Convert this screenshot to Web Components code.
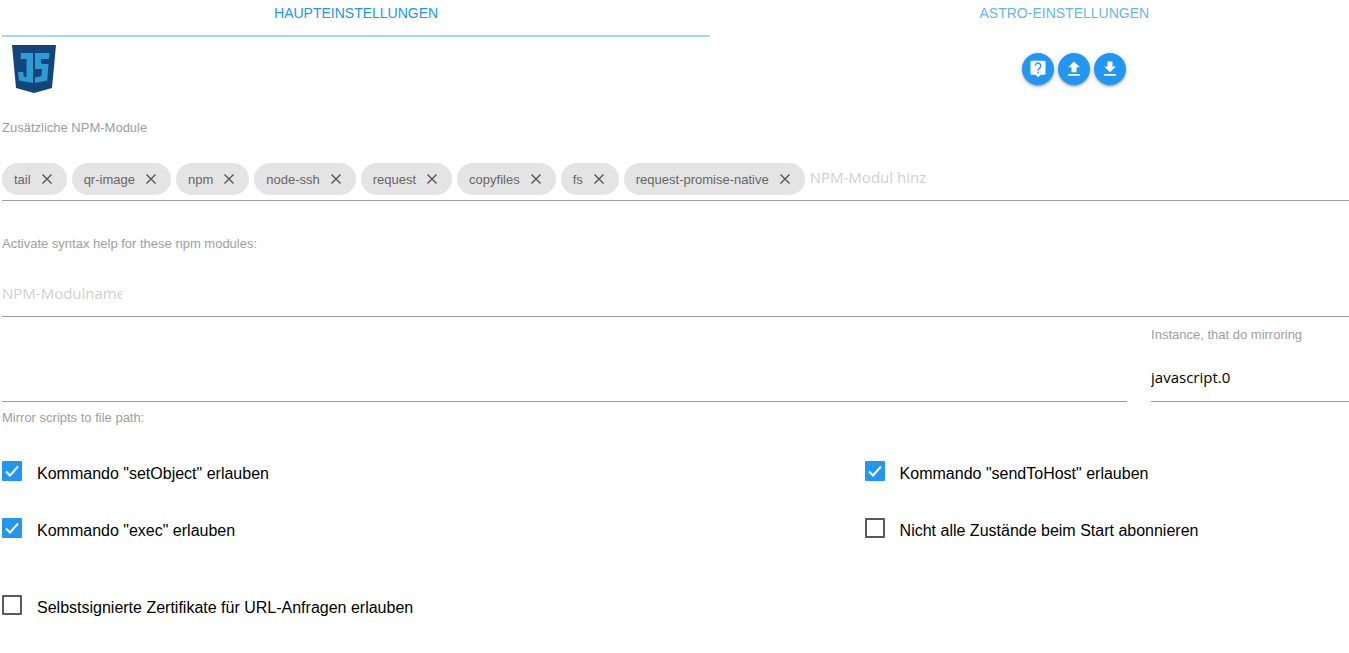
<!DOCTYPE html>
<html lang="de">
<head>
<meta charset="utf-8">
<title>JavaScript Adapter</title>
<style>
  body {
    margin: 0;
    background: #fff;
    font-family: "Liberation Sans", Arial, sans-serif;
  }

  chips-field + chips-field {
    margin-top: 16px;
  }
</style>
</head>
<body>
<adapter-page>
  <tab-bar slot="tabs">
    <tab-item active>Haupteinstellungen</tab-item>
    <tab-item>Astro-Einstellungen</tab-item>
  </tab-bar>
  <adapter-header slot="header">
    <icon-button icon="help" title="Hilfe"></icon-button>
    <icon-button icon="upload" title="Laden"></icon-button>
    <icon-button icon="download" title="Speichern"></icon-button>
  </adapter-header>
  <chips-field label="Zusätzliche NPM-Module" placeholder="NPM-Modul hinz">
    <chip-item>tail</chip-item>
    <chip-item>qr-image</chip-item>
    <chip-item>npm</chip-item>
    <chip-item>node-ssh</chip-item>
    <chip-item>request</chip-item>
    <chip-item>copyfiles</chip-item>
    <chip-item>fs</chip-item>
    <chip-item>request-promise-native</chip-item>
  </chips-field>
  <chips-field label="Activate syntax help for these npm modules:" placeholder="NPM-Modulname"></chips-field>
  <field-row>
    <text-field label="Mirror scripts to file path:"></text-field>
    <select-field label="Instance, that do mirroring" options='["javascript.0"]'></select-field>
  </field-row>
  <check-grid>
    <check-field checked>Kommando "setObject" erlauben</check-field>
    <check-field checked>Kommando "sendToHost" erlauben</check-field>
    <check-field checked>Kommando "exec" erlauben</check-field>
    <check-field>Nicht alle Zustände beim Start abonnieren</check-field>
  </check-grid>
  <check-grid>
    <check-field>Selbstsignierte Zertifikate für URL-Anfragen erlauben</check-field>
  </check-grid>
</adapter-page>

<script>
// Attaches an open shadow root filled with the given markup
function render(el, html) {
  const tpl = document.createElement('template');
  tpl.innerHTML = html;
  el.attachShadow({mode: 'open'}).appendChild(tpl.content.cloneNode(true));
}

// Page frame, the content runs a little past the right edge
class AdapterPage extends HTMLElement {
  constructor() {
    super();
    render(this, `
      <style>
        :host {
          display: block;
          overflow: hidden;
        }

        .content {
          display: flex;
          flex-direction: column;
          width: 105%;
          margin-left: 2px;
        }
      </style>
      <div class="content">
        <slot name="tabs"></slot>
        <slot name="header"></slot>
        <slot></slot>
      </div>
    `);
  }
}
customElements.define('adapter-page', AdapterPage);

class TabBar extends HTMLElement {
  constructor() {
    super();
    render(this, `
      <style>
        :host {
          display: block;
        }

        nav {
          display: flex;
        }
      </style>
      <nav><slot></slot></nav>
    `);
  }
}
customElements.define('tab-bar', TabBar);

class TabItem extends HTMLElement {
  constructor() {
    super();
    render(this, `
      <style>
        :host {
          flex: 1;
        }

        a {
          display: block;
          padding-bottom: 9px;
          border-bottom: 2px solid transparent;
          font-size: 14px;
          line-height: 26px;
          text-align: center;
          text-decoration: none;
          text-transform: uppercase;
          color: #64b5f6;
        }

        :host([active]) a {
          color: #2196f3;
          border-color: #a6d5fa;
        }
      </style>
      <a href="#"><slot></slot></a>
    `);
  }
}
customElements.define('tab-item', TabItem);

class AdapterHeader extends HTMLElement {
  constructor() {
    super();
    render(this, `
      <style>
        :host {
          display: grid;
          grid-template-columns: 72fr 28fr;
          align-items: center;
          height: 64px;
        }

        .logo {
          display: block;
          width: 44px;
          height: 48px;
          margin-left: 10px;
        }

        .buttons {
          display: flex;
          gap: 4px;
        }
      </style>
      <svg class="logo" viewBox="0 0 44 48" role="img" aria-label="JavaScript">
        <path fill="#12457c" d="M0 0h44l-4 43-18 5-18-5z"/>
        <path fill="#2f9bd2" d="M9 8h12v30L7 35.500l-1-8.500h5.500v4.500l3 .8V14H8.500zM23 8h14.500l-.5 6h-8v5h7.500L35.300 35.500 23 38v-5.500l6.500-1.500.5-7h-7z"/>
      </svg>
      <div class="buttons"><slot></slot></div>
    `);
  }
}
customElements.define('adapter-header', AdapterHeader);

const icons = {
  help: '<path d="M4 2h16a1 1 0 0 1 1 1v15a1 1 0 0 1-1 1h-5l-3 3-3-3H4a1 1 0 0 1-1-1V3a1 1 0 0 1 1-1z"/><path d="M8.700 8.200a3.300 3.300 0 1 1 5.600 2.300c-1.300 1.200-2.300 1.900-2.300 3.700M12 15.400v1.900" fill="none" stroke="#2196f3" stroke-width="1.700"/>',
  upload: '<path d="M9 16h6v-6h4l-7-7-7 7h4zm-4 2h14v2H5z"/>',
  download: '<path d="M19 9h-4V3H9v6H5l7 7 7-7zM5 18v2h14v-2z"/>'
};

class IconButton extends HTMLElement {
  constructor() {
    super();
    render(this, `
      <style>
        :host {
          display: block;
        }

        button {
          display: flex;
          align-items: center;
          justify-content: center;
          width: 32px;
          height: 32px;
          padding: 0;
          border: none;
          border-radius: 50%;
          background: #2196f3;
          box-shadow: 0 2px 2px rgba(0, 0, 0, 0.14), 0 3px 1px -2px rgba(0, 0, 0, 0.12), 0 1px 5px rgba(0, 0, 0, 0.2);
          cursor: pointer;
        }

        svg {
          width: 20px;
          height: 20px;
          fill: #fff;
        }
      </style>
      <button type="button"><svg viewBox="0 0 24 24"></svg></button>
    `);
  }
  connectedCallback() {
    this.shadowRoot.querySelector('svg').innerHTML = icons[this.getAttribute('icon')];
    this.shadowRoot.querySelector('button').setAttribute('aria-label', this.getAttribute('title'));
  }
}
customElements.define('icon-button', IconButton);

class ChipItem extends HTMLElement {
  constructor() {
    super();
    render(this, `
      <style>
        :host {
          display: flex;
          align-items: center;
          gap: 8px;
          height: 32px;
          padding: 0 12px;
          box-sizing: border-box;
          border-radius: 16px;
          background: #e4e4e4;
          font-size: 13px;
          color: #666;
        }

        button {
          display: flex;
          padding: 0;
          border: none;
          background: none;
          cursor: pointer;
        }

        svg {
          width: 16px;
          height: 16px;
          stroke: #555;
          fill: none;
        }
      </style>
      <slot></slot>
      <button type="button" aria-label="Entfernen">
        <svg viewBox="0 0 16 16"><path stroke-width="1.4" d="M3.500 3.500l9 9M12.500 3.500l-9 9"/></svg>
      </button>
    `);
    this.shadowRoot.querySelector('button').addEventListener('click', () => this.remove());
  }
}
customElements.define('chip-item', ChipItem);

class ChipsField extends HTMLElement {
  constructor() {
    super();
    render(this, `
      <style>
        :host {
          display: block;
          padding-top: 19px;
        }

        label {
          display: block;
          font-size: 13px;
          line-height: 16px;
          color: #9e9e9e;
        }

        .chips {
          display: flex;
          align-items: center;
          gap: 5px;
          height: 32px;
          margin-top: 27px;
          padding-bottom: 5px;
          border-bottom: 1px solid #9e9e9e;
        }

        input {
          width: 120px;
          height: 32px;
          padding: 0 0 4px;
          box-sizing: border-box;
          border: none;
          outline: none;
          background: none;
          font-family: "Open Sans", sans-serif;
          font-size: 15px;
        }

        input::placeholder {
          color: #d1d1d1;
        }
      </style>
      <label for="entry"></label>
      <div class="chips">
        <slot></slot>
        <input id="entry" type="text">
      </div>
    `);
  }
  connectedCallback() {
    this.shadowRoot.querySelector('label').textContent = this.getAttribute('label');
    this.shadowRoot.querySelector('input').placeholder = this.getAttribute('placeholder') || '';
  }
}
customElements.define('chips-field', ChipsField);

class FieldRow extends HTMLElement {
  constructor() {
    super();
    render(this, `
      <style>
        :host {
          display: grid;
          grid-template-columns: 808fr 192fr;
          column-gap: 24px;
          align-items: start;
          padding-top: 10px;
        }
      </style>
      <slot></slot>
    `);
  }
}
customElements.define('field-row', FieldRow);

class TextField extends HTMLElement {
  constructor() {
    super();
    render(this, `
      <style>
        :host {
          display: block;
          padding-top: 26px;
        }

        input {
          display: block;
          width: 100%;
          height: 49px;
          padding: 0;
          box-sizing: border-box;
          border: none;
          border-bottom: 1px solid #9e9e9e;
          outline: none;
          font-family: "Open Sans", sans-serif;
          font-size: 15px;
        }

        label {
          display: block;
          margin-top: 8px;
          font-size: 13px;
          line-height: 16px;
          color: #9e9e9e;
        }
      </style>
      <input id="entry" type="text">
      <label for="entry"></label>
    `);
  }
  connectedCallback() {
    this.shadowRoot.querySelector('label').textContent = this.getAttribute('label');
  }
}
customElements.define('text-field', TextField);

class SelectField extends HTMLElement {
  constructor() {
    super();
    render(this, `
      <style>
        :host {
          display: block;
        }

        label {
          display: block;
          font-size: 13px;
          line-height: 16px;
          color: #9e9e9e;
        }

        select {
          display: block;
          appearance: none;
          width: 100%;
          height: 49px;
          margin-top: 10px;
          padding: 0;
          border: none;
          border-bottom: 1px solid #9e9e9e;
          border-radius: 0;
          outline: none;
          background: none;
          font-family: "Open Sans", sans-serif;
          font-size: 15px;
          color: #000;
        }
      </style>
      <label for="choice"></label>
      <select id="choice"></select>
    `);
  }
  connectedCallback() {
    const select = this.shadowRoot.querySelector('select');
    this.shadowRoot.querySelector('label').textContent = this.getAttribute('label');
    JSON.parse(this.getAttribute('options') || '[]').forEach(item => {
      const option = document.createElement('option');
      option.textContent = item;
      select.appendChild(option);
    });
  }
}
customElements.define('select-field', SelectField);

class CheckGrid extends HTMLElement {
  constructor() {
    super();
    render(this, `
      <style>
        :host {
          display: grid;
          grid-template-columns: 609fr 391fr;
          row-gap: 32px;
          padding-top: 35px;
        }

        :host(:last-child) {
          padding-top: 52px;
        }
      </style>
      <slot></slot>
    `);
  }
}
customElements.define('check-grid', CheckGrid);

class CheckField extends HTMLElement {
  constructor() {
    super();
    render(this, `
      <style>
        :host {
          display: flex;
          align-items: flex-start;
          gap: 15px;
          height: 25px;
        }

        .box {
          display: grid;
          width: 20px;
          height: 20px;
        }

        input, svg {
          grid-area: 1 / 1;
        }

        input {
          appearance: none;
          width: 20px;
          height: 20px;
          margin: 0;
          border: 2px solid #5a5a5a;
          border-radius: 1px;
          cursor: pointer;
        }

        input:checked {
          border-color: #2196f3;
          background: #2196f3;
        }

        svg {
          visibility: hidden;
          pointer-events: none;
          fill: none;
          stroke: #fff;
        }

        input:checked + svg {
          visibility: visible;
        }

        label {
          font-size: 16px;
          line-height: 25px;
          color: #000;
        }
      </style>
      <span class="box">
        <input id="check" type="checkbox">
        <svg viewBox="0 0 20 20"><path stroke-width="2" d="M4 10.500l4 4 8-9"/></svg>
      </span>
      <label for="check"><slot></slot></label>
    `);
  }
  connectedCallback() {
    this.shadowRoot.querySelector('input').checked = this.hasAttribute('checked');
  }
}
customElements.define('check-field', CheckField);
</script>
</body>
</html>
